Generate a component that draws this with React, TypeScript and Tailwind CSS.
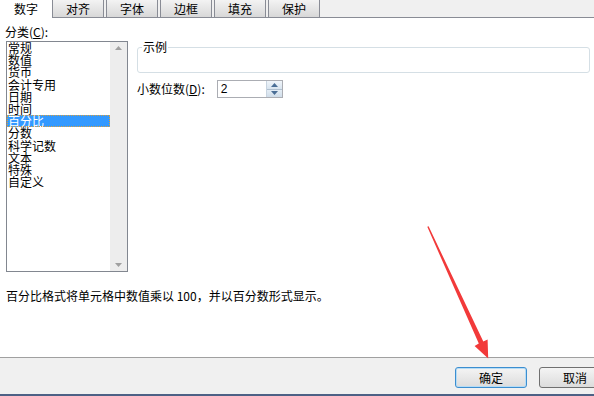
import React from 'react';

const font = { fontFamily: '"Noto Sans CJK SC", "Liberation Sans", sans-serif' };

const tabs = ['对齐', '字体', '边框', '填充', '保护'];

const categories = ['常规', '数值', '货币', '会计专用', '日期', '时间', '百分比', '分数', '科学记数', '文本', '特殊', '自定义'];

function Tab({ label }: { label: string }) {
  return (
    <div className="w-[52px] h-[17px] ml-[2px] first:ml-0 flex items-center justify-center border-x border-[#898c95] bg-gradient-to-b from-[#f3f3f3] to-[#d8d8d8] text-[12px] leading-none text-black">
      {label}
    </div>
  );
}

function CategoryList() {
  return (
    <div className="w-[122px] h-[231px] mt-[3px] border border-[#828790] bg-white flex">
      <div className="flex-1 flex flex-col">
        {categories.map((c) => (
          <div
            key={c}
            className={
              c === '百分比'
                ? 'h-[12.2px] leading-[12.2px] text-[12px] pl-[1px] bg-[#3399ff] text-white outline outline-1 outline-dotted outline-[#d8a040] -outline-offset-1'
                : 'h-[12.2px] leading-[12.2px] text-[12px] pl-[1px] text-black'
            }
          >
            {c}
          </div>
        ))}
      </div>
      {/* scrollbar */}
      <div className="w-[17px] bg-[#ededed] flex flex-col justify-between items-center py-[4px]">
        <svg width="7" height="4" viewBox="0 0 7 4">
          <polygon points="0,4 7,4 3.5,0" fill="#a0a0a0" />
        </svg>
        <svg width="7" height="4" viewBox="0 0 7 4">
          <polygon points="0,0 7,0 3.5,4" fill="#a0a0a0" />
        </svg>
      </div>
    </div>
  );
}

function Spinner() {
  return (
    <div className="w-[66px] h-[18px] border border-[#abadb3] bg-white flex ml-[12px]">
      <div className="flex-1 pl-[3px] text-[12px] leading-[16px] text-black" style={{ fontFamily: '"Liberation Sans", sans-serif' }}>
        2
      </div>
      <div className="w-[16px] flex flex-col border-l border-[#c8d4e0]">
        <div className="flex-1 flex items-center justify-center bg-gradient-to-b from-[#f0f5fa] to-[#d8e4ef] border-b border-[#b0c0d0]">
          <svg width="7" height="4" viewBox="0 0 7 4">
            <polygon points="0,4 7,4 3.5,0" fill="#4a6e96" />
          </svg>
        </div>
        <div className="flex-1 flex items-center justify-center bg-gradient-to-b from-[#e4edf5] to-[#d0dde9]">
          <svg width="7" height="4" viewBox="0 0 7 4">
            <polygon points="0,0 7,0 3.5,4" fill="#4a6e96" />
          </svg>
        </div>
      </div>
    </div>
  );
}

export default function App() {
  return (
    <div className="relative w-[594px] h-[396px] overflow-hidden bg-white flex flex-col text-black" style={font}>
      {/* tabs */}
      <div className="h-[17px] flex bg-[#f0f0f0] border-b border-[#898c95] shrink-0 box-content">
        <div className="w-[52px] h-[18px] bg-white flex items-center justify-center text-[12px] leading-none -mb-[1px]">数字</div>
        <div className="flex">
          {tabs.map((t) => (
            <Tab key={t} label={t} />
          ))}
        </div>
      </div>

      {/* body */}
      <div className="flex-1 flex flex-col px-[6px]">
        <div className="flex gap-[9px]">
          <div className="flex flex-col pt-[8px]">
            <div className="text-[12px] leading-[12px] -ml-[1px]">
              分类(<span className="underline">C</span>):
            </div>
            <CategoryList />
          </div>

          <div className="flex-1 flex flex-col pt-[29px]">
            <div className="relative h-[26px] border border-[#d5dfe5] rounded-[3px] -mr-[2px]">
              <span className="absolute -top-[8px] left-[4px] bg-white px-[1px] text-[12px] leading-[14px]">示例</span>
            </div>
            <div className="flex items-center mt-[7px]">
              <span className="text-[12px] leading-[12px]">
                小数位数(<span className="underline">D</span>):
              </span>
              <Spinner />
            </div>
          </div>
        </div>

        <div className="mt-[17px] text-[12px] leading-[14px]">百分比格式将单元格中数值乘以 100，并以百分数形式显示。</div>
      </div>

      {/* footer */}
      <div className="h-[39px] shrink-0 bg-[#f0f0f0] border-t border-[#a0a0a0] border-b-2 border-b-[#4d6185] flex items-start pt-[9px] pl-[455px] gap-[12px]">
        <button className="w-[72px] h-[21px] shrink-0 rounded-[3px] border border-[#3c8ed0] bg-gradient-to-b from-[#f4f4f4] to-[#dcdcdc] text-[12px] leading-none shadow-[inset_0_0_0_1px_#b6dcf5]">
          确定
        </button>
        <button className="w-[72px] h-[21px] shrink-0 rounded-[3px] border border-[#707070] bg-gradient-to-b from-[#f4f4f4] to-[#dcdcdc] text-[12px] leading-none">
          取消
        </button>
      </div>

      {/* red annotation arrow */}
      <svg className="absolute left-0 top-0 pointer-events-none" width="594" height="396" viewBox="0 0 594 396">
        <polygon
          points="427.3,226.8 428.6,226.3 483.3,341.5 487.6,339.6 488.2,358.6 474.6,345.9 478.8,343.6"
          fill="#f23a3a"
        />
      </svg>
    </div>
  );
}
